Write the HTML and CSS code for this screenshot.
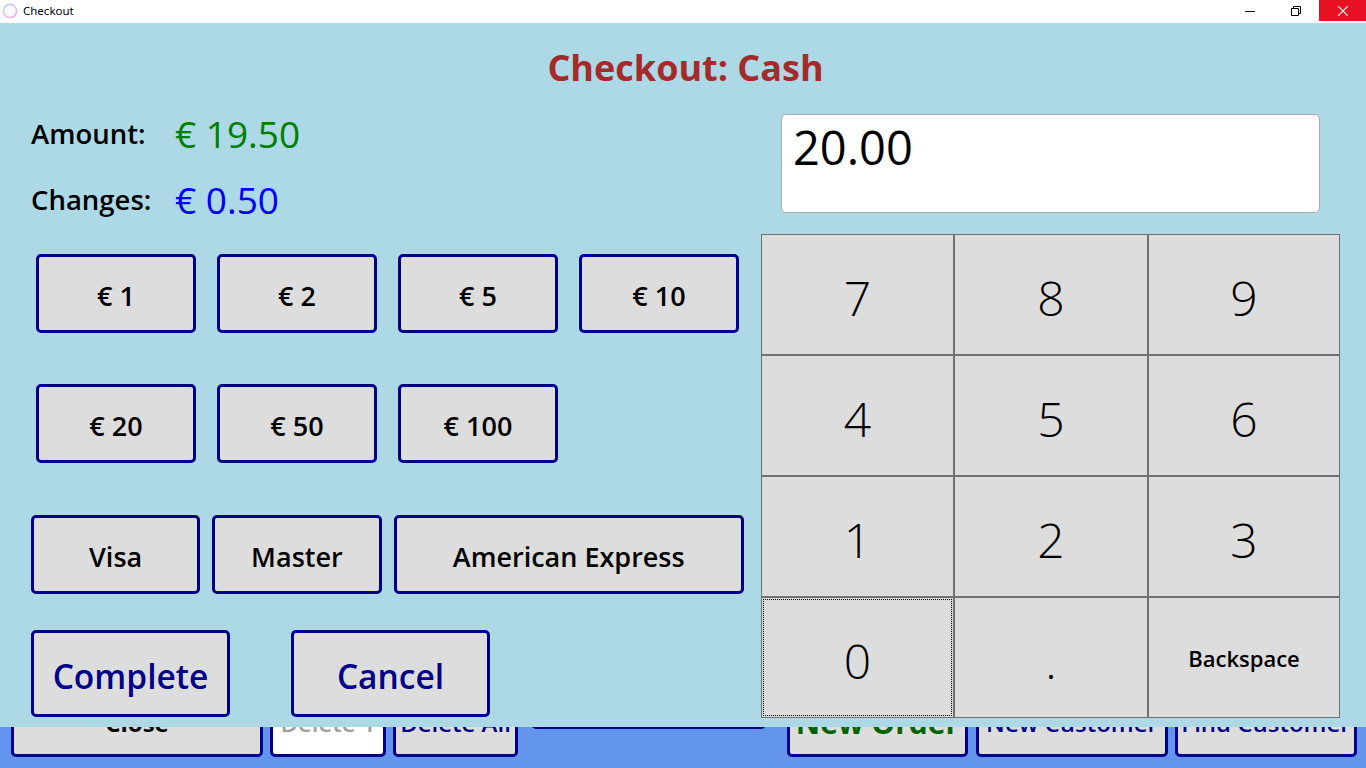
FILE: index.html
```html
<!DOCTYPE html>
<html>
  <head>
    <title>Checkout</title>
    <link rel="stylesheet" href="styles.css">
  </head>
  <body>
    <div class="titlebar">
      <svg class="app-icon" width="16" height="16" viewBox="0 0 16 16">
        <defs>
          <linearGradient id="ring" x1="0" y1="0" x2="1" y2="1">
            <stop offset="0" stop-color="#9fd6f5"/>
            <stop offset="0.5" stop-color="#e3c6f2"/>
            <stop offset="1" stop-color="#f2a8e6"/>
          </linearGradient>
        </defs>
        <circle cx="8" cy="8" r="6.6" fill="#fbf8ff" stroke="url(#ring)" stroke-width="1.6"/>
      </svg>
      <span class="caption">Checkout</span>
      <div class="controls">
        <span class="ctl">
          <svg width="10" height="10" viewBox="0 0 10 10"><path d="M0 5.5h10" stroke="#000" stroke-width="1"/></svg>
        </span>
        <span class="ctl">
          <svg width="10" height="10" viewBox="0 0 10 10"><path d="M0.5 2.5h7v7h-7z M2.5 2.5v-2h7v7h-2" fill="none" stroke="#000" stroke-width="1"/></svg>
        </span>
        <span class="ctl close">
          <svg width="10" height="10" viewBox="0 0 10 10"><path d="M0 0L10 10M10 0L0 10" stroke="#fff" stroke-width="1.1"/></svg>
        </span>
      </div>
    </div>

    <div class="checkout">
      <h1 class="heading">Checkout: Cash</h1>
      <div class="panes">
        <div class="left">
          <div class="total">
            <span class="label">Amount:</span>
            <span class="value amount">€ 19.50</span>
          </div>
          <div class="total">
            <span class="label">Changes:</span>
            <span class="value change">€ 0.50</span>
          </div>

          <div class="cash">
            <button class="btn">€ 1</button>
            <button class="btn">€ 2</button>
            <button class="btn">€ 5</button>
            <button class="btn">€ 10</button>
            <button class="btn">€ 20</button>
            <button class="btn">€ 50</button>
            <button class="btn">€ 100</button>
          </div>

          <div class="cards">
            <button class="btn visa">Visa</button>
            <button class="btn master">Master</button>
            <button class="btn amex">American Express</button>
          </div>

          <div class="actions">
            <button class="btn big">Complete</button>
            <button class="btn big">Cancel</button>
          </div>
        </div>

        <div class="right">
          <div class="entry">20.00</div>
          <div class="keypad">
            <button class="key">7</button>
            <button class="key">8</button>
            <button class="key">9</button>
            <button class="key">4</button>
            <button class="key">5</button>
            <button class="key">6</button>
            <button class="key">1</button>
            <button class="key">2</button>
            <button class="key">3</button>
            <button class="key focused">0</button>
            <button class="key">.</button>
            <button class="key word">Backspace</button>
          </div>
        </div>
      </div>
    </div>

    <div class="behind">
      <button class="back close-btn">Close</button>
      <button class="back del1">Delete 1</button>
      <button class="back delall">Delete All</button>
      <div class="back-box"></div>
      <button class="back order">New Order</button>
      <button class="back cust">New Customer</button>
      <button class="back find">Find Customer</button>
    </div>
  </body>
</html>
```

FILE: styles.css
```css
body {
  margin: 0;
  width: 1366px;
  height: 768px;
  overflow: hidden;
  font-family: "Open Sans", "Noto Sans", sans-serif;
  background: #6495ed;
}

/* window frame */
.titlebar {
  height: 23px;
  background: #fff;
  display: flex;
  align-items: flex-start;
}
.app-icon { margin: 3px 0 0 2px; }
.caption {
  font-family: "Noto Sans", sans-serif;
  font-size: 11.5px;
  line-height: 22px;
  margin-left: 5px;
  color: #000;
}
.controls { margin-left: auto; display: flex; }
.ctl {
  width: 46px;
  height: 21px;
  display: flex;
  align-items: center;
  justify-content: center;
}
.ctl.close { background: #e81123; width: 47px; }

/* checkout dialog */
.checkout {
  height: 704px;
  background: #add8e6;
  padding: 0 26px 0 31px;
  box-sizing: border-box;
}
.heading {
  margin: 0;
  height: 87px;
  padding-top: 22px;
  box-sizing: border-box;
  text-align: center;
  font-size: 36px;
  line-height: 46px;
  font-weight: 700;
  color: #a52a2a;
}
.panes {
  display: flex;
  justify-content: space-between;
}
.left { width: 713px; }
.right { width: 579px; }

.total {
  display: flex;
  align-items: center;
  height: 46px;
}
.total + .total { margin-top: 20px; }
.label {
  width: 144px;
  font-size: 27.5px;
  font-weight: 600;
  color: #000;
}
.value { font-size: 37px; }
.amount { color: #008000; }
.change { color: #0000ff; }

.btn {
  font-family: inherit;
  background: #dddddd;
  border: 3px solid #00008b;
  border-radius: 5px;
  font-size: 27px;
  font-weight: 600;
  color: #000;
  padding: 4px 0 0;
}
.cash {
  margin: 32px 0 0 5px;
  display: grid;
  grid-template-columns: repeat(4, 160px);
  grid-auto-rows: 79px;
  column-gap: 21px;
  row-gap: 51px;
}
.cards {
  margin-top: 52px;
  display: flex;
  gap: 12px;
}
.cards .btn { height: 79px; width: 170px; }
.cards .amex { width: 352px; }

.actions {
  margin-top: 36px;
  display: flex;
  gap: 61px;
}
.btn.big {
  width: 199px;
  height: 87px;
  font-size: 33.5px;
  color: #00008b;
}

.entry {
  margin: 4px 20px 0 20px;
  height: 99px;
  box-sizing: border-box;
  background: #fff;
  border: 1px solid #a8a8a8;
  border-radius: 5px;
  padding: 2px 0 0 11px;
  font-size: 47px;
  line-height: 60px;
  color: #000;
}
.keypad {
  margin-top: 21px;
  display: grid;
  grid-template-columns: 193px 194px 192px;
  grid-auto-rows: 121px;
}
.key {
  font-family: inherit;
  background: #dddddd;
  border: 1px solid #707070;
  margin: 0;
  font-size: 48px;
  font-weight: 300;
  color: #000;
  padding: 6px 0 0;
}
.key.focused {
  outline: 1px dotted #000;
  outline-offset: -3px;
}
.key.word {
  font-size: 22px;
  font-weight: 600;
  padding: 0;
}

/* main window peeking out underneath */
.behind {
  height: 41px;
  display: flex;
  align-items: flex-end;
  overflow: hidden;
  padding: 0 0 11px 11px;
  box-sizing: border-box;
}
.back {
  flex: none;
  height: 70px;
  font-family: inherit;
  background: #dddddd;
  border: 3px solid #00008b;
  border-radius: 5px;
  font-size: 24px;
  font-weight: 600;
  color: #00008b;
  padding: 0;
  margin-right: 7px;
}
.close-btn { width: 252px; color: #000; font-weight: 700; }
.del1 { width: 116px; background: #fff; color: #a0a0a0; }
.delall { width: 125px; margin-right: 13px; }
.back-box {
  flex: none;
  width: 235px;
  height: 60px;
  margin: 0 21px 28px 0;
  border: 3px solid #00008b;
  border-radius: 5px;
  box-sizing: border-box;
}
.order { width: 181px; color: #006400; font-size: 30px; font-weight: 700; margin-right: 8px; }
.cust { width: 192px; }
.find { width: 182px; }
```
